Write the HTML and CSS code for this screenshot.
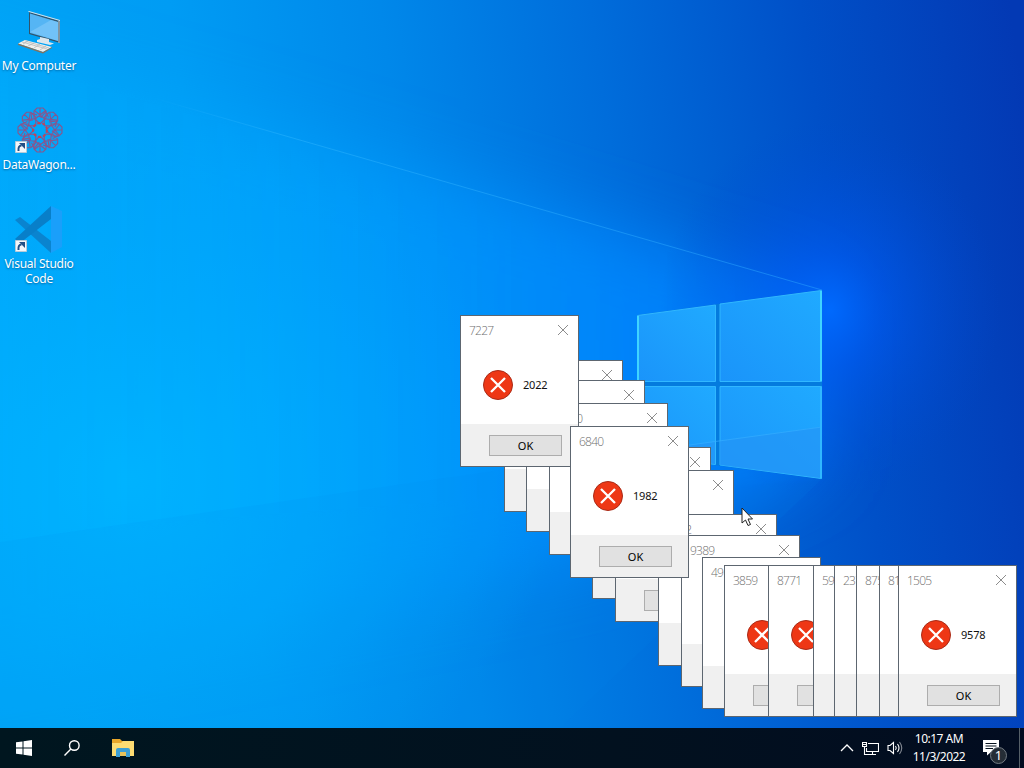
FILE: index.html
```html
<!DOCTYPE html>
<html lang="en">
  <head>
    <meta charset="utf-8" />
    <meta name="viewport" content="width=device-width,initial-scale=1.0" />
    <title>Desktop</title>
    <link rel="stylesheet" href="styles.css" />
  </head>

  <body>
    <main id="desktop">
      <svg class="wallpaper" viewBox="0 0 1024 728" aria-hidden="true">
        <defs>
          <linearGradient id="base" gradientUnits="userSpaceOnUse" x1="-20" y1="150" x2="1010" y2="0">
            <stop offset="0" stop-color="#00a4f6" />
            <stop offset="0.2" stop-color="#009cf4" />
            <stop offset="0.4" stop-color="#0088ea" />
            <stop offset="0.6" stop-color="#006ddb" />
            <stop offset="0.8" stop-color="#0050c8" />
            <stop offset="1" stop-color="#0339b4" />
          </linearGradient>
          <linearGradient id="beam" gradientUnits="userSpaceOnUse" x1="0" y1="0" x2="822" y2="0">
            <stop offset="0" stop-color="#00b0ff" stop-opacity="0.4" />
            <stop offset="0.35" stop-color="#00a6ff" stop-opacity="0.6" />
            <stop offset="0.7" stop-color="#008cff" stop-opacity="0.8" />
            <stop offset="1" stop-color="#0078ff" stop-opacity="0.9" />
          </linearGradient>
          <radialGradient id="glow">
            <stop offset="0" stop-color="#006aff" stop-opacity="0.95" />
            <stop offset="0.3" stop-color="#005af4" stop-opacity="0.6" />
            <stop offset="1" stop-color="#0048d0" stop-opacity="0" />
          </radialGradient>
          <radialGradient id="leftGlow">
            <stop offset="0" stop-color="#00b6ff" stop-opacity="0.85" />
            <stop offset="1" stop-color="#00a8ff" stop-opacity="0" />
          </radialGradient>
          <linearGradient id="ray" gradientUnits="userSpaceOnUse" x1="150" y1="0" x2="822" y2="0">
            <stop offset="0" stop-color="#30b8ff" stop-opacity="0" />
            <stop offset="0.2" stop-color="#30b8ff" stop-opacity="0.45" />
            <stop offset="1" stop-color="#2ba4ff" stop-opacity="0.5" />
          </linearGradient>
          <linearGradient id="pane" x1="0" y1="1" x2="1" y2="0">
            <stop offset="0" stop-color="#1a94fa" />
            <stop offset="1" stop-color="#20aaff" />
          </linearGradient>
          <filter id="soft" x="-20%" y="-20%" width="140%" height="140%">
            <feGaussianBlur stdDeviation="34" />
          </filter>
          <filter id="slight"><feGaussianBlur stdDeviation="2" /></filter>
        </defs>
        <rect width="1024" height="728" fill="url(#base)" />
        <path d="M-100 20L265 125L822 295V465L600 560L-100 700Z" fill="url(#beam)" filter="url(#soft)" />
        <ellipse cx="130" cy="480" rx="430" ry="360" fill="url(#leftGlow)" />
        <ellipse cx="830" cy="310" rx="170" ry="190" fill="url(#glow)" />
        <path d="M265 130L822 290V479L-20 540V50Z" fill="url(#beam)" opacity="0.14" filter="url(#slight)" />
        <path d="M150 97L265 130L822 290" fill="none" stroke="url(#ray)" />
        <path d="M822 479L637 455L500 470L-20 545V728H560Z" fill="#008cee" opacity="0.1" />
        <path d="M637 315L822 290V479L637 455Z" fill="#047bde" />
        <g fill="url(#pane)" stroke="#31b7ff" stroke-width="1">
          <path d="M637.5 315.5L715.5 305V381.5H637.5Z" />
          <path d="M720 304L821.5 290.5V381.5H720Z" />
          <path d="M637.5 386.5H715.5V464.5L637.5 455Z" />
          <path d="M720 386.5H821.5V478.5L720 465Z" />
        </g>
        <path d="M720 441L821 427V478L720 465ZM638 452L715 442V464L638 455Z" fill="#2395f6" opacity="0.7" />
        <path d="M638 452L822 427" stroke="#35adff" opacity="0.7" />
        <path d="M821 291V381M638 316V382" stroke="#3fd4ff" stroke-width="2" />
        <path d="M821 387V478" stroke="#30b8ff" stroke-width="2" />
      </svg>

      <div class="shortcuts">
        <div class="shortcut">
          <svg width="48" height="48" viewBox="0 0 48 48">
            <path d="M14 4L45 13V35L14 26Z" fill="#31546c" />
            <path d="M13 4L14 3L45 12V13L14 4Z" fill="#d8e4ea" />
            <path d="M15 5.500L43 14V33L15 25Z" fill="#55b5f4" />
            <path d="M15 24L36 12L43 14V33Z" fill="#83ccfa" opacity="0.6" />
            <path d="M44 13V35" stroke="#cdd6da" />
            <path d="M25 29L34 31V34L39 35.500L35 37L22 34V32L25 31Z" fill="#dce6ec" />
            <path d="M10 32L37 39L28 44L3 35.500Z" fill="#f2efea" />
            <path d="M3 35.500L28 44L37 39V40L28 45.500L3 37Z" fill="#81735f" />
            <path d="M7 34L32 41M10 33L34 40M13 33L8 36M19 35L13 38M25 36L19 40M31 38L25 42" stroke="#b0b5b8" stroke-width="0.7" />
          </svg>
          <span>My Computer</span>
        </div>
        <div class="shortcut">
          <svg width="48" height="48" viewBox="0 0 48 48">
            <g id="flower" fill="none" stroke="#a0487a" stroke-width="1.1" opacity="0.85"></g>
            <circle cx="25" cy="23" r="7" fill="none" stroke="#c14459" stroke-width="2" stroke-dasharray="3 2" />
            <use href="#arrow" />
          </svg>
          <span>DataWagon...</span>
        </div>
        <div class="shortcut">
          <svg width="48" height="48" viewBox="0 0 48 48">
            <path d="M0 14L5 11L36 35V47Z" fill="#0a84cf" />
            <path d="M0 33L5 37L36 13V0Z" fill="#087fc9" />
            <path d="M36 0L47 5V41L36 47Z" fill="#1a9ffa" />
            <g id="arrow">
              <path d="M0.500 34.500H11.500V45.500H0.500Z" fill="#f4f7fa" stroke="#b7cad8" />
              <path d="M3.500 44C3 40 4.500 38.500 6.500 38.500" fill="none" stroke="#234f85" stroke-width="2" />
              <path d="M4 36H10V42Z" fill="#234f85" />
            </g>
          </svg>
          <span>Visual Studio Code</span>
        </div>
      </div>

      <div id="dialogs"></div>

      <svg class="cursor" width="13" height="20" viewBox="0 0 13 20">
        <path d="M1 1V16L4.500 13L7 18.500L9.500 17.500L7 12H11.500Z" fill="#fff" stroke="#222" />
      </svg>
    </main>

    <footer class="taskbar">
      <div class="launchers">
        <svg width="16" height="16" viewBox="0 0 16 16" fill="#fff">
          <path d="M0 2.300L6.500 1.400V7.500H0ZM7.500 1.200L16 0V7.500H7.500ZM0 8.500H6.500V14.600L0 13.700ZM7.500 8.500H16V16L7.500 14.800Z" />
        </svg>
        <svg width="16" height="16" viewBox="0 0 16 16" fill="none" stroke="#fff" stroke-width="1.4">
          <circle cx="10.300" cy="5.500" r="4.800" />
          <path d="M6.900 9L0.500 15.500" />
        </svg>
        <svg width="22" height="18" viewBox="0 0 22 18">
          <path d="M0 0H8L10 2H22V17H0Z" fill="#e9a72a" />
          <path d="M0 4H9L11 2H22V17H0Z" fill="#fddc72" />
          <path d="M4 18V11Q4 9 6 9H16Q18 9 18 11V18H14V13H8V18Z" fill="#3c9fd4" />
          <path d="M8 13H14V17H8Z" fill="#e8c35b" />
        </svg>
      </div>
      <div class="tray">
        <svg width="14" height="8" viewBox="0 0 14 8" fill="none" stroke="#fff" stroke-width="1.3">
          <path d="M1 7L7 1L13 7" />
        </svg>
        <svg width="17" height="15" viewBox="0 0 17 15" fill="none" stroke="#fff" stroke-width="1.1">
          <path d="M6 2.500H16.500V10.500H4.500V7M10.500 10.500V13.500M6 13.500H14M0.500 1.500H4.500V5.500H0.500ZM2.500 5.500V13.500H6M1 3.500H4" />
        </svg>
        <svg width="16" height="14" viewBox="0 0 16 14" fill="none" stroke="#fff" stroke-width="1.1">
          <path d="M1 4.500H3L6.500 1.500V12.500L3 9.500H1Z" />
          <path d="M8.500 5Q10 7 8.500 9M10.500 3Q13.500 7 10.500 11" />
          <path d="M12.500 1Q17 7 12.500 13" opacity="0.5" />
        </svg>
        <div class="clock">
          <span>10:17 AM</span>
          <span>11/3/2022</span>
        </div>
        <div class="notifications">
          <svg width="16" height="16" viewBox="0 0 16 16">
            <path d="M0 0H16V12H8L4 15.500V12H0Z" fill="#fff" />
            <path d="M2.500 3.500H13.500M2.500 6H13.500M2.500 8.500H10" stroke="#07131f" />
          </svg>
          <span class="badge">1</span>
        </div>
        <div class="peek"></div>
      </div>
    </footer>

    <script>
      // listed back to front
      const dialogs = [
        { x: 504, y: 360 },
        { x: 526, y: 380 },
        { x: 549, y: 403, title: "7660" },
        { x: 592, y: 447 },
        { x: 615, y: 470 },
        { x: 658, y: 514, title: "4812" },
        { x: 681, y: 535, title: "9389" },
        { x: 702, y: 557, title: "49" },
        { x: 724, y: 565, title: "3859" },
        { x: 768, y: 565, title: "8771" },
        { x: 813, y: 565, title: "59" },
        { x: 834, y: 565, title: "237" },
        { x: 856, y: 565, title: "875" },
        { x: 879, y: 565, title: "81" },
        { x: 898, y: 565, title: "1505", message: "9578", ok: "OK" },
        { x: 460, y: 315, title: "7227", message: "2022", ok: "OK" },
        { x: 570, y: 426, title: "6840", message: "1982", ok: "OK" },
      ];

      const container = document.getElementById("dialogs");
      dialogs.forEach((d) => {
        const el = document.createElement("section");
        el.className = "dialog";
        el.style.left = d.x + "px";
        el.style.top = d.y + "px";
        el.innerHTML = `
          <header>
            <span>${d.title || ""}</span>
            <svg width="12" height="12" viewBox="0 0 12 12"><path d="M1 1L11 11M11 1L1 11" /></svg>
          </header>
          <div class="content">
            <svg width="30" height="30" viewBox="0 0 30 30">
              <circle cx="15" cy="15" r="14.500" fill="#ee3715" stroke="#a82b17" />
              <path d="M8 8L22 22M22 8L8 22" stroke="#fff" stroke-width="2.300" />
            </svg>
            <span>${d.message || ""}</span>
          </div>
          <div class="actions"><button>${d.ok || ""}</button></div>`;
        container.appendChild(el);
      });

      let petals = "";
      for (let i = 0; i < 8; i++) {
        petals += `<path transform="rotate(${i * 45} 25 23)" d="M25 17L19 11V4L22 1H28L31 4V11ZM20 4L30 12M30 4L20 12M17 14L16 6L22 8M25 1V10" />`;
      }
      document.getElementById("flower").innerHTML = petals;
    </script>
  </body>
</html>
```
FILE: styles.css
```css
* {
  box-sizing: border-box;
}

body {
  margin: 0;
  width: 1024px;
  height: 768px;
  overflow: hidden;
  display: flex;
  flex-direction: column;
  font-family: "Noto Sans", "Open Sans", sans-serif;
}

svg {
  display: block;
  flex-shrink: 0;
}

#desktop {
  position: relative;
  height: 728px;
}

.wallpaper {
  position: absolute;
  width: 1024px;
  height: 728px;
}

.shortcuts {
  position: relative;
  width: 78px;
  padding-top: 8px;
}

.shortcut {
  height: 99px;
  display: flex;
  flex-direction: column;
  align-items: center;
  color: #fff;
  font-size: 12px;
  line-height: 15px;
  text-align: center;
  text-shadow: 0 1px 2px rgba(0, 40, 80, 0.5);
}

.shortcut span {
  margin-top: 2px;
  letter-spacing: -0.25px;
}

.dialog {
  position: absolute;
  width: 119px;
  height: 152px;
  display: flex;
  flex-direction: column;
  background: #fff;
  border: 1px solid #5d6670;
  font-size: 11px;
  letter-spacing: -0.2px;
}

.dialog header {
  height: 28px;
  padding: 0 9px 0 8px;
  display: flex;
  align-items: center;
  justify-content: space-between;
  color: #707070;
  font-family: "Open Sans", sans-serif;
  font-size: 12px;
  font-weight: 300;
  letter-spacing: -0.75px;
}

.dialog header svg {
  fill: none;
  stroke: #8c8c8c;
}

.content {
  flex: 1;
  display: flex;
  align-items: center;
  gap: 10px;
  padding: 1px 0 0 22px;
  color: #111;
}

.actions {
  height: 42px;
  display: flex;
  align-items: center;
  padding-left: 28px;
  background: #f0f0f0;
}

.actions button {
  width: 73px;
  height: 21px;
  padding: 0;
  background: #e1e1e1;
  border: 1px solid #adadad;
  color: #000;
  font: inherit;
}

.cursor {
  position: absolute;
  left: 741px;
  top: 507px;
}

.taskbar {
  height: 40px;
  display: flex;
  justify-content: space-between;
  background: linear-gradient(90deg, #00161f, #02111f 60%, #020c20);
}

.launchers {
  display: flex;
  align-items: center;
  gap: 32px;
  padding-left: 16px;
}

.tray {
  display: flex;
  align-items: center;
}

.tray > svg {
  margin-right: 8px;
}

.clock {
  width: 56px;
  display: flex;
  flex-direction: column;
  align-items: center;
  color: #fff;
  font-size: 12px;
  line-height: 18px;
  letter-spacing: -0.5px;
  white-space: nowrap;
}

.notifications {
  position: relative;
  margin: 0 20px 0 16px;
}

.badge {
  position: absolute;
  left: 7px;
  top: 7px;
  width: 17px;
  height: 17px;
  border: 1px solid #737b83;
  border-radius: 50%;
  background: #252d36;
  color: #fff;
  font-size: 13px;
  line-height: 14px;
  text-align: center;
}

.peek {
  width: 5px;
  height: 40px;
  border-left: 1px solid #566068;
}
```
